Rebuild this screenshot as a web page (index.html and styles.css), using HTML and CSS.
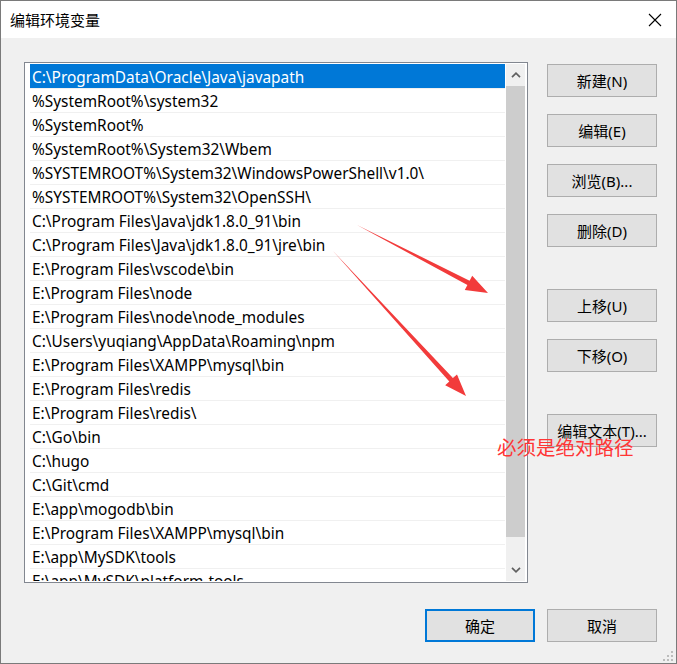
FILE: index.html
```html
<!DOCTYPE html>
<html lang="zh-CN">
<head>
    <meta charset="UTF-8">
    <title>编辑环境变量</title>
    <link rel="stylesheet" href="styles.css">
</head>
<body>
<div class="window">
    <div class="titlebar">
        <span class="title">编辑环境变量</span>
        <svg class="close" width="14" height="14" viewBox="0 0 14 14">
            <path d="M1 1 L13 13 M13 1 L1 13" stroke="#000" stroke-width="1.1" fill="none"/>
        </svg>
    </div>

    <div class="content">
        <div class="main">
            <div class="listbox">
                <ul class="rows">
                    <li class="row selected">C:\ProgramData\Oracle\Java\javapath</li>
                    <li class="row">%SystemRoot%\system32</li>
                    <li class="row">%SystemRoot%</li>
                    <li class="row">%SystemRoot%\System32\Wbem</li>
                    <li class="row">%SYSTEMROOT%\System32\WindowsPowerShell\v1.0\</li>
                    <li class="row">%SYSTEMROOT%\System32\OpenSSH\</li>
                    <li class="row">C:\Program Files\Java\jdk1.8.0_91\bin</li>
                    <li class="row">C:\Program Files\Java\jdk1.8.0_91\jre\bin</li>
                    <li class="row">E:\Program Files\vscode\bin</li>
                    <li class="row">E:\Program Files\node</li>
                    <li class="row">E:\Program Files\node\node_modules</li>
                    <li class="row">C:\Users\yuqiang\AppData\Roaming\npm</li>
                    <li class="row">E:\Program Files\XAMPP\mysql\bin</li>
                    <li class="row">E:\Program Files\redis</li>
                    <li class="row">E:\Program Files\redis\</li>
                    <li class="row">C:\Go\bin</li>
                    <li class="row">C:\hugo</li>
                    <li class="row">C:\Git\cmd</li>
                    <li class="row">E:\app\mogodb\bin</li>
                    <li class="row">E:\Program Files\XAMPP\mysql\bin</li>
                    <li class="row">E:\app\MySDK\tools</li>
                    <li class="row">E:\app\MySDK\platform-tools</li>
                </ul>
                <div class="scrollbar">
                    <div class="sb-btn">
                        <svg width="10" height="6" viewBox="0 0 10 6"><polyline points="1,5.2 5,1.2 9,5.2" fill="none" stroke="#606060" stroke-width="1.7"/></svg>
                    </div>
                    <div class="sb-track"><div class="sb-thumb"></div></div>
                    <div class="sb-btn">
                        <svg width="10" height="6" viewBox="0 0 10 6"><polyline points="1,0.8 5,4.8 9,0.8" fill="none" stroke="#606060" stroke-width="1.7"/></svg>
                    </div>
                </div>
            </div>

            <div class="side">
                <button class="btn">新建(N)</button>
                <button class="btn">编辑(E)</button>
                <button class="btn">浏览(B)...</button>
                <button class="btn">删除(D)</button>
                <button class="btn spaced">上移(U)</button>
                <button class="btn">下移(O)</button>
                <button class="btn spaced">编辑文本(T)...</button>
            </div>
        </div>

        <div class="footer">
            <button class="btn default">确定</button>
            <button class="btn">取消</button>
        </div>
    </div>

    <!-- annotations drawn over the screenshot -->
    <svg class="arrows" width="677" height="664" viewBox="0 0 677 664">
        <polygon points="357,225 469.6,280.7 472.2,275.8 488,293 464.8,290 467.4,285.1" fill="#f23b3b"/>
        <polygon points="333,251 452.9,378.1 457,374.4 466,396 445.2,385.2 449.3,381.5" fill="#f23b3b"/>
    </svg>
    <div class="note">必须是绝对路径</div>

    <svg class="grip" width="12" height="12" viewBox="0 0 12 12">
        <rect x="9" y="9" width="2" height="2"/><rect x="5" y="9" width="2" height="2"/><rect x="1" y="9" width="2" height="2"/>
        <rect x="9" y="5" width="2" height="2"/><rect x="5" y="5" width="2" height="2"/>
        <rect x="9" y="1" width="2" height="2"/>
    </svg>
</div>
</body>
</html>
```

FILE: styles.css
```css
* { box-sizing: border-box; }
body {
    margin: 0;
    font-family: "Noto Sans", "Noto Sans CJK SC", sans-serif;
    font-size: 15px;
    color: #000;
}
.window {
    position: relative;
    width: 677px;
    height: 664px;
    border: 1px solid #7a7a7a;
    background: #f0f0f0;
    overflow: hidden;
}
.titlebar {
    height: 37px;
    background: #fff;
    display: flex;
    align-items: center;
    justify-content: space-between;
    padding: 0 14px 0 9px;
}
.title { font-size: 15px; padding-bottom: 1px; }
.close { display: block; }

.content { padding: 24px 19px 0 23px; }
.main { display: flex; gap: 19px; }

.listbox {
    width: 504px;
    height: 521px;
    border: 1px solid #828790;
    background: #fff;
    display: flex;
    padding: 1px 2px 1px 5px;
    gap: 1px;
}
.rows {
    list-style: none;
    margin: 0;
    padding: 0;
    flex: 1;
    overflow: hidden;
    font-size: 15.4px;
}
.row {
    height: 24px;
    line-height: 21px;
    padding: 2px 0 0 2px;
    border-top: 1px solid #f0f0f0;
    white-space: nowrap;
    overflow: hidden;
}
.row.selected {
    background: #0078d7;
    border-top-color: transparent;
    color: #fff;
}
.scrollbar {
    width: 19px;
    background: #f0f0f0;
    display: flex;
    flex-direction: column;
}
.sb-btn {
    height: 22px;
    display: flex;
    align-items: center;
    justify-content: center;
}
.sb-btn svg { display: block; }
.sb-track { flex: 1; }
.sb-thumb { height: 451px; background: #cdcdcd; }

.side {
    width: 110px;
    display: flex;
    flex-direction: column;
    gap: 17px;
    padding-top: 2px;
}
.side .spaced { margin-top: 25px; }

.btn {
    width: 110px;
    height: 33px;
    border: 1px solid #adadad;
    background: #e1e1e1;
    font-family: "Noto Sans", "Noto Sans CJK SC", sans-serif;
    font-size: 15px;
    color: #000;
    padding: 0;
}
.btn.default { border: 2px solid #0078d7; }

.footer {
    display: flex;
    justify-content: flex-end;
    gap: 12px;
    margin-top: 26px;
}

.arrows {
    position: absolute;
    left: -1px;
    top: -1px;
    pointer-events: none;
}
.note {
    position: absolute;
    left: 496px;
    top: 436px;
    font-size: 19.5px;
    line-height: 20px;
    color: #ff3535;
    font-family: "Noto Sans CJK SC", sans-serif;
    white-space: nowrap;
}
.grip {
    position: absolute;
    right: 2px;
    bottom: 1px;
    fill: #bcbcbc;
}
```
